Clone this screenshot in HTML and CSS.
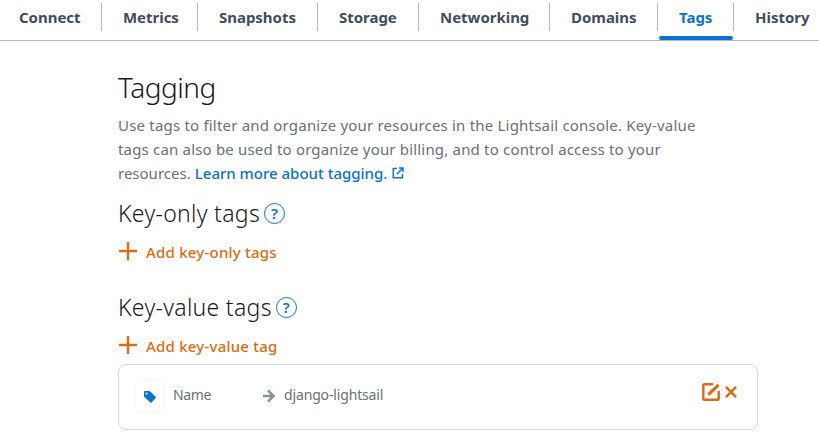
FILE: index.html
```html
<!DOCTYPE html>
<html lang="en">
<head>
<meta charset="utf-8">
<title>Tagging</title>
<link rel="stylesheet" href="styles.css">
</head>
<body>
<nav class="tabs">
  <a class="tab">Connect</a>
  <a class="tab">Metrics</a>
  <a class="tab">Snapshots</a>
  <a class="tab">Storage</a>
  <a class="tab">Networking</a>
  <a class="tab">Domains</a>
  <a class="tab active">Tags</a>
  <a class="tab">History</a>
</nav>
<main class="content">
  <h1 class="title">Tagging</h1>
  <p class="intro"><span>Use tags to filter and organize your resources in the Lightsail console. Key-value</span><br><span class="second">tags can also be used to organize your billing, and to control access to your</span><br><span class="last">resources.</span> <a class="link">Learn more about tagging.</a><svg class="external" width="12" height="12" viewBox="0 0 12 12"><path d="M5 1.5H1.2V10.8H10.5V7M7 1H11V5M11 1L4.8 7.2"/></svg></p>
  <section class="group">
    <h2 class="heading"><span>Key-only tags</span><span class="help">?</span></h2>
    <a class="add"><svg width="18" height="18" viewBox="0 0 18 18"><path d="M9 0V18M0 9H18"/></svg><span>Add key-only tags</span></a>
  </section>
  <section class="group">
    <h2 class="heading"><span>Key-value tags</span><span class="help">?</span></h2>
    <a class="add"><svg width="18" height="18" viewBox="0 0 18 18"><path d="M9 0V18M0 9H18"/></svg><span>Add key-value tag</span></a>
  </section>
  <div class="card">
    <span class="badge"><svg width="12" height="12" viewBox="0 0 12 12"><path fill="#0972d3" fill-rule="evenodd" d="M1 0H5.6L11.7 5.8Q12.2 6.4 11.7 7L7.6 11.5Q7 12 6.4 11.5L0 5.4V1Q0 0 1 0ZM2.5 1.4A1.1 1.1 0 1 0 2.5 3.6A1.1 1.1 0 1 0 2.5 1.4Z"/></svg></span>
    <span class="key">Name</span>
    <svg class="arrow" width="12" height="14" viewBox="0 0 12 14"><path d="M0 7H10M5 1.4L10.4 7L5 12.6"/></svg>
    <span class="value">django-lightsail</span>
    <svg class="edit" width="18" height="18" viewBox="0 0 18 18"><path d="M11 1.3H2.6Q1.3 1.3 1.3 2.6V15.4Q1.3 16.7 2.6 16.7H15.4Q16.7 16.7 16.7 15.4V8"/><path class="pencil" d="M6.3 11.7L16.6 1.9"/></svg>
    <svg class="remove" width="12" height="12" viewBox="0 0 12 12"><path d="M.9 .9L11.1 11.1M11.1 .9L.9 11.1"/></svg>
  </div>
</main>
</body>
</html>
```
FILE: styles.css
```css
body {
  margin: 0;
  background: #fff;
  font-family: "Noto Sans", sans-serif;
  color: #687078;
  overflow: hidden;
}
span, .link { white-space: nowrap; }
.tabs {
  display: grid;
  grid-template-columns: 102px 96px 120px 101px 131px 108px 76px 96px;
  height: 40px;
  border-bottom: 1px solid #b0b8c8;
}
.tab {
  position: relative;
  box-sizing: border-box;
  height: 28px;
  margin-top: 3px;
  padding-left: 21px;
  border-right: 1px solid #b0b8c8;
  font-size: 15px;
  font-weight: 700;
  line-height: 29px;
  letter-spacing: -0.03px;
  color: #414d5c;
}
.tab:first-child { padding-left: 19px; }
.tab:last-child { border-right: 0; }
.active { color: #0972d3; }
.active::after {
  content: "";
  position: absolute;
  left: 1px;
  right: 0;
  top: 33px;
  height: 4px;
  border-radius: 2px;
  background: #0972d3;
}
.content { width: 640px; margin-left: 118px; }
.title {
  margin: 28px 0 0;
  font-size: 28px;
  font-weight: 300;
  line-height: 36px;
  letter-spacing: -0.5px;
  color: #16191f;
}
.intro {
  margin: 8px 0 0;
  font-size: 15px;
  line-height: 24px;
  letter-spacing: 0.2px;
}
.second { letter-spacing: 0.18px; }
.last, .link { letter-spacing: 0; }
.link { color: #0972d3; font-weight: 500; }
.external {
  margin-left: 5px;
  fill: none;
  stroke: #0972d3;
  stroke-width: 1.4;
}
.group { height: 94px; padding-top: 13px; box-sizing: border-box; }
.heading {
  display: flex;
  align-items: center;
  margin: 0;
  font-size: 23px;
  font-weight: 300;
  line-height: 30px;
  letter-spacing: 0.3px;
  color: #16191f;
}
.help {
  box-sizing: border-box;
  width: 21px;
  height: 21px;
  margin-left: 4px;
  border: 1px solid #0972d3;
  border-radius: 50%;
  font-size: 15px;
  font-weight: 600;
  line-height: 19px;
  letter-spacing: 0;
  text-align: center;
  color: #0972d3;
}
.add {
  display: flex;
  align-items: center;
  gap: 9px;
  height: 24px;
  margin: 12px 0 0 1px;
  font-size: 15px;
  font-weight: 500;
  letter-spacing: 0.22px;
  color: #dd6b10;
}
.add svg { margin-top: -2px; stroke: #dd6b10; stroke-width: 2.4; }
.card {
  display: flex;
  align-items: center;
  box-sizing: border-box;
  height: 66px;
  margin-top: -9px;
  padding: 0 20px 3px 16px;
  border: 1px solid #d5dbdb;
  border-radius: 8px;
  font-size: 14px;
  letter-spacing: -0.15px;
}
.badge {
  display: flex;
  align-items: center;
  justify-content: center;
  box-sizing: border-box;
  width: 30px;
  height: 32px;
  padding-top: 3px;
  border: 1px solid #f0f8ff;
  border-radius: 4px;
}
.key { width: 90px; margin: -2px 0 0 8px; letter-spacing: -0.4px; }
.arrow { fill: none; stroke: #879596; stroke-width: 2.6; }
.value { margin: -2px 0 0 9px; }
.edit { margin: -8px 5px 0 auto; fill: none; stroke: #dd6b10; stroke-width: 2.4; }
.pencil { stroke-width: 3.2; }
.remove { margin-top: -8px; stroke: #dd6b10; stroke-width: 2.5; }
```
